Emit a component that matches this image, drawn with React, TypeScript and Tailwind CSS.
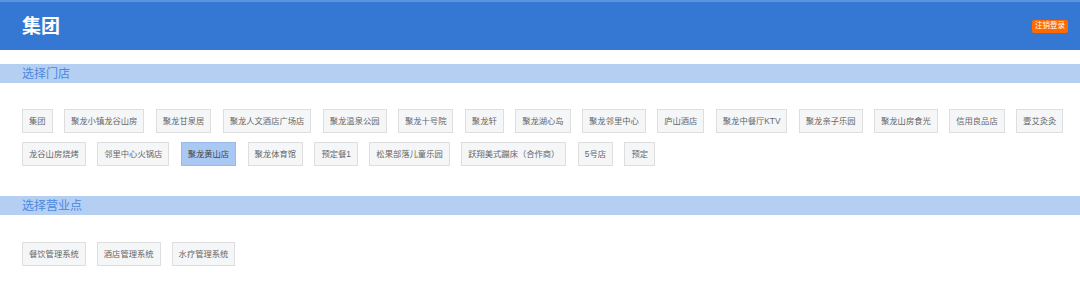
const stores = [
  '集团',
  '聚龙小镇龙谷山房',
  '聚龙甘泉居',
  '聚龙人文酒店广场店',
  '聚龙温泉公园',
  '聚龙十号院',
  '聚龙轩',
  '聚龙湖心岛',
  '聚龙邻里中心',
  '庐山酒店',
  '聚龙中餐厅KTV',
  '聚龙亲子乐园',
  '聚龙山房食光',
  '信用良品店',
  '壹艾灸灸',
  '龙谷山房烧烤',
  '邻里中心火锅店',
  '聚龙黄山店',
  '聚龙体育馆',
  '预定餐1',
  '松果部落儿童乐园',
  '跃翔美式蹦床（合作商）',
  '5号店',
  '预定',
];

const points = ['餐饮管理系统', '酒店管理系统', '水疗管理系统'];

const selectedStore = '聚龙黄山店';

const Chip = ({ label, active }: { label: string; active?: boolean }) => (
  <button
    className={`h-[24px] px-[6px] border text-[8.3px] leading-none flex items-center whitespace-nowrap ${
      active
        ? 'bg-[#a9c8f4] border-[#9ab9e6] text-[#444]'
        : 'bg-[#f5f6f8] border-[#dedede] text-[#666]'
    }`}
  >
    {label}
  </button>
);

const SectionBar = ({ title }: { title: string }) => (
  <div className="h-[19px] bg-[#b4cff2] flex items-center px-[22px]">
    <span className="text-[12px] leading-none text-[#4a89df]">{title}</span>
  </div>
);

const App = () => {
  return (
    <div
      className="min-h-screen w-[1080px] bg-white"
      style={{ fontFamily: '"Liberation Sans", "Noto Sans CJK SC", sans-serif' }}
    >
      {/* header */}
      <header className="h-[50px] bg-[#3578d4] border-t-2 border-[#5d92dc] flex items-center justify-between pl-[22px] pr-[12px]">
        <h1 className="text-[19px] font-bold text-white leading-none">集团</h1>
        <button className="h-[13px] px-[3px] rounded-[2px] bg-[#ff6a00] text-white text-[7.5px] leading-none flex items-center">
          注销登录
        </button>
      </header>

      <div className="mt-[14px]">
        <SectionBar title="选择门店" />
        <div className="flex flex-wrap gap-x-[11.4px] gap-y-[9px] pl-[22px] pr-[10px] pt-[26px]">
          {stores.map((s) => (
            <Chip key={s} label={s} active={s === selectedStore} />
          ))}
        </div>
      </div>

      <div className="mt-[30px]">
        <SectionBar title="选择营业点" />
        <div className="flex flex-wrap gap-x-[11px] gap-y-[9px] pl-[22px] pr-[10px] pt-[27px]">
          {points.map((p) => (
            <Chip key={p} label={p} />
          ))}
        </div>
      </div>
    </div>
  );
};

export default App;
